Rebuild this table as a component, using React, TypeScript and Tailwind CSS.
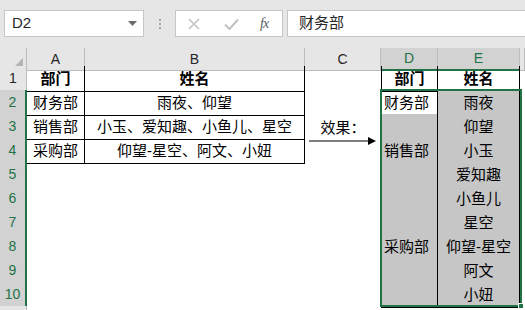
import React from 'react'

const cols = ['A', 'B', 'C', 'D', 'E', '']

type Row = { a?: string; b?: string; c?: string; d?: string; e?: string }

const rows: Row[] = [
  { a: '部门', b: '姓名', d: '部门', e: '姓名' },
  { a: '财务部', b: '雨夜、仰望', d: '财务部', e: '雨夜' },
  { a: '销售部', b: '小玉、爱知趣、小鱼儿、星空', c: '效果：', e: '仰望' },
  { a: '采购部', b: '仰望-星空、阿文、小妞', d: '销售部', e: '小玉' },
  { e: '爱知趣' },
  { e: '小鱼儿' },
  { e: '星空' },
  { d: '采购部', e: '仰望-星空' },
  { e: '阿文' },
  { e: '小妞' },
  {},
]

const rowGrid = 'grid grid-cols-[27px_58px_220px_76px_57px_82px_1fr]'

function FormulaBar() {
  return (
    <div className="h-[48px] bg-[#e6e6e6] flex items-start pt-[10px] pl-[4px]">
      {/* name box */}
      <div className="w-[140px] h-[27px] bg-white border border-[#c6c6c6] flex items-center justify-between pl-[7px] pr-[6px]">
        <span className="text-[15px] text-[#262626]">D2</span>
        <svg width="9" height="5" viewBox="0 0 9 5">
          <path d="M0 0 L9 0 L4.5 5 Z" fill="#6b6b6b" />
        </svg>
      </div>
      <div className="w-[31px] h-[27px] flex flex-col items-center justify-center gap-[2px]">
        <span className="w-[2px] h-[2px] bg-[#a6a6a6]" />
        <span className="w-[2px] h-[2px] bg-[#a6a6a6]" />
        <span className="w-[2px] h-[2px] bg-[#a6a6a6]" />
      </div>
      {/* cancel / enter / fx */}
      <div className="w-[108px] h-[27px] bg-white border border-[#c6c6c6] flex items-center">
        <svg width="12" height="12" viewBox="0 0 12 12" className="ml-[12px]">
          <path d="M1 1 L11 11 M11 1 L1 11" stroke="#c2c2c2" strokeWidth="1.6" />
        </svg>
        <svg width="15" height="12" viewBox="0 0 15 12" className="ml-[24px]">
          <path d="M1 6.5 L5.5 11 L14 1.5" stroke="#c2c2c2" strokeWidth="2" fill="none" />
        </svg>
        <span className="ml-[21px] text-[14px] italic text-[#595959] font-['Liberation_Serif',serif] tracking-[-1px]">
          fx
        </span>
      </div>
      <div className="ml-[4px] flex-1 h-[27px] bg-white border border-[#c6c6c6] border-r-0 flex items-center pl-[11px]">
        <span className="text-[15px] text-[#262626]">财务部</span>
      </div>
    </div>
  )
}

function Sheet() {
  const base = 'flex items-center pt-[2px] text-[15px] text-black whitespace-nowrap'
  return (
    <div className="relative bg-white">
      {/* column headers */}
      <div className={`${rowGrid} h-[18px]`}>
        <div className="bg-[#e6e6e6] border-r border-b border-[#bdbdbd] flex items-end justify-end pr-[3px] pb-[2px]">
          <svg width="10" height="10" viewBox="0 0 10 10">
            <path d="M10 0 L10 10 L0 10 Z" fill="#b4b4b4" />
          </svg>
        </div>
        {cols.map((c, i) => {
          const sel = c === 'D' || c === 'E'
          return (
            <div
              key={i}
              className={
                sel
                  ? 'bg-[#d2d2d2] border-r border-[#bdbdbd] border-b-2 border-b-[#217346] flex items-center justify-center text-[14px] text-[#217346]'
                  : 'bg-[#e6e6e6] border-r border-b border-[#bdbdbd] flex items-center justify-center text-[14px] text-[#262626]'
              }
            >
              {c}
            </div>
          )
        })}
      </div>

      {rows.map((r, i) => {
        const n = i + 1
        const sel = n >= 2 && n <= 10
        const inA = n <= 4
        const inD = n <= 10
        const head = n === 1
        return (
          <div key={n} className={`${rowGrid} h-[24px]`}>
            <div
              className={
                sel
                  ? 'bg-[#d2d2d2] border-b border-[#bdbdbd] border-r-2 border-r-[#217346] flex items-end justify-center pb-[2px] text-[14px] text-[#217346]'
                  : 'bg-[#e6e6e6] border-b border-r border-[#bdbdbd] flex items-end justify-center pb-[2px] text-[14px] text-[#262626]'
              }
            >
              {n}
            </div>
            <div className={`${base} justify-center ${inA ? 'border-r border-b border-black' : ''} ${head ? 'font-bold' : ''}`}>
              {r.a}
            </div>
            <div className={`${base} justify-center ${inA ? 'border-r border-b border-black' : ''} ${head ? 'font-bold' : ''}`}>
              {r.b}
            </div>
            <div className={`${base} justify-center relative`}>
              {r.c}
              {r.c && (
                <svg width="70" height="10" viewBox="0 0 70 10" className="absolute left-[3px] bottom-[-6px]">
                  <path d="M1 5 L62 5" stroke="#000" strokeWidth="1" />
                  <path d="M60 1 L68 5 L60 9 Z" fill="#000" />
                </svg>
              )}
            </div>
            <div
              className={`${base} ${head ? 'justify-center font-bold' : 'justify-start pl-[2px]'} ${
                inD ? 'border-l border-r border-b border-black' : ''
              } ${sel && n !== 2 ? 'bg-[#c6c6c6]' : ''}`}
            >
              {r.d}
            </div>
            <div
              className={`${base} justify-center ${inD ? 'border-r border-b border-black' : ''} ${
                head ? 'font-bold' : ''
              } ${sel ? 'bg-[#c6c6c6]' : ''}`}
            >
              {r.e}
            </div>
            <div />
          </div>
        )
      })}

      {/* selection D2:E10 */}
      <div className="absolute left-[380px] top-[41px] w-[142px] h-[218px] border-2 border-[#217346] pointer-events-none">
        <div className="absolute -right-[4px] -bottom-[4px] w-[6px] h-[6px] bg-[#217346] border border-white" />
      </div>
    </div>
  )
}

export default function App() {
  return (
    <div className="w-[525px] h-[310px] overflow-hidden bg-white font-['Liberation_Sans','Noto_Sans_CJK_SC',sans-serif]">
      <FormulaBar />
      <Sheet />
    </div>
  )
}
